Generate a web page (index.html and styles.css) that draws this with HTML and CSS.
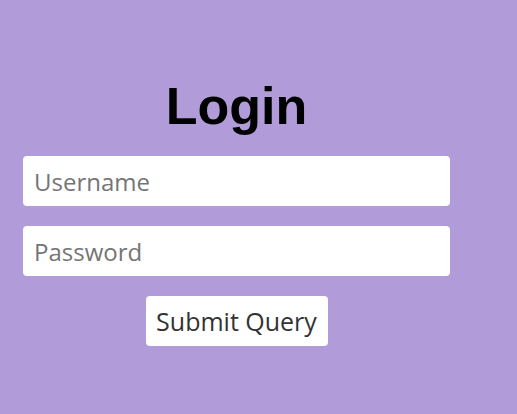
FILE: index.html
```html
<!DOCTYPE html>
<html>
<head>
<meta charset="utf-8">
<link rel="stylesheet" href="styles.css">
</head>
<body>
<form class="login">
  <h1 class="title">Login</h1>
  <input class="field" type="text" placeholder="Username">
  <input class="field" type="password" placeholder="Password">
  <input class="submit" type="submit" value="Submit Query">
</form>
</body>
</html>
```
FILE: styles.css
```css
html, body {
  margin: 0;
  padding: 0;
  background: #b19cd9;
  height: 100%;
}
.login {
  width: 427px;
  margin-left: 23px;
  padding-top: 76px;
  display: flex;
  flex-direction: column;
  align-items: center;
  gap: 20px;
}
.title {
  margin: 0;
  font-family: "Liberation Sans", Arial, sans-serif;
  font-weight: bold;
  font-size: 52px;
  line-height: 60px;
  color: #000;
}
.field {
  box-sizing: border-box;
  width: 427px;
  height: 50px;
  border: none;
  border-radius: 4px;
  background: #fff;
  padding: 0 11px;
  font-family: "Open Sans", sans-serif;
  font-size: 24px;
  color: #333;
  outline: none;
}
.field::placeholder {
  color: #757575;
}
.submit {
  box-sizing: border-box;
  height: 50px;
  width: 182px;
  border: none;
  border-radius: 4px;
  background: #fff;
  font-family: "Open Sans", sans-serif;
  font-size: 25px;
  color: #333;
  padding: 0;
}
```
